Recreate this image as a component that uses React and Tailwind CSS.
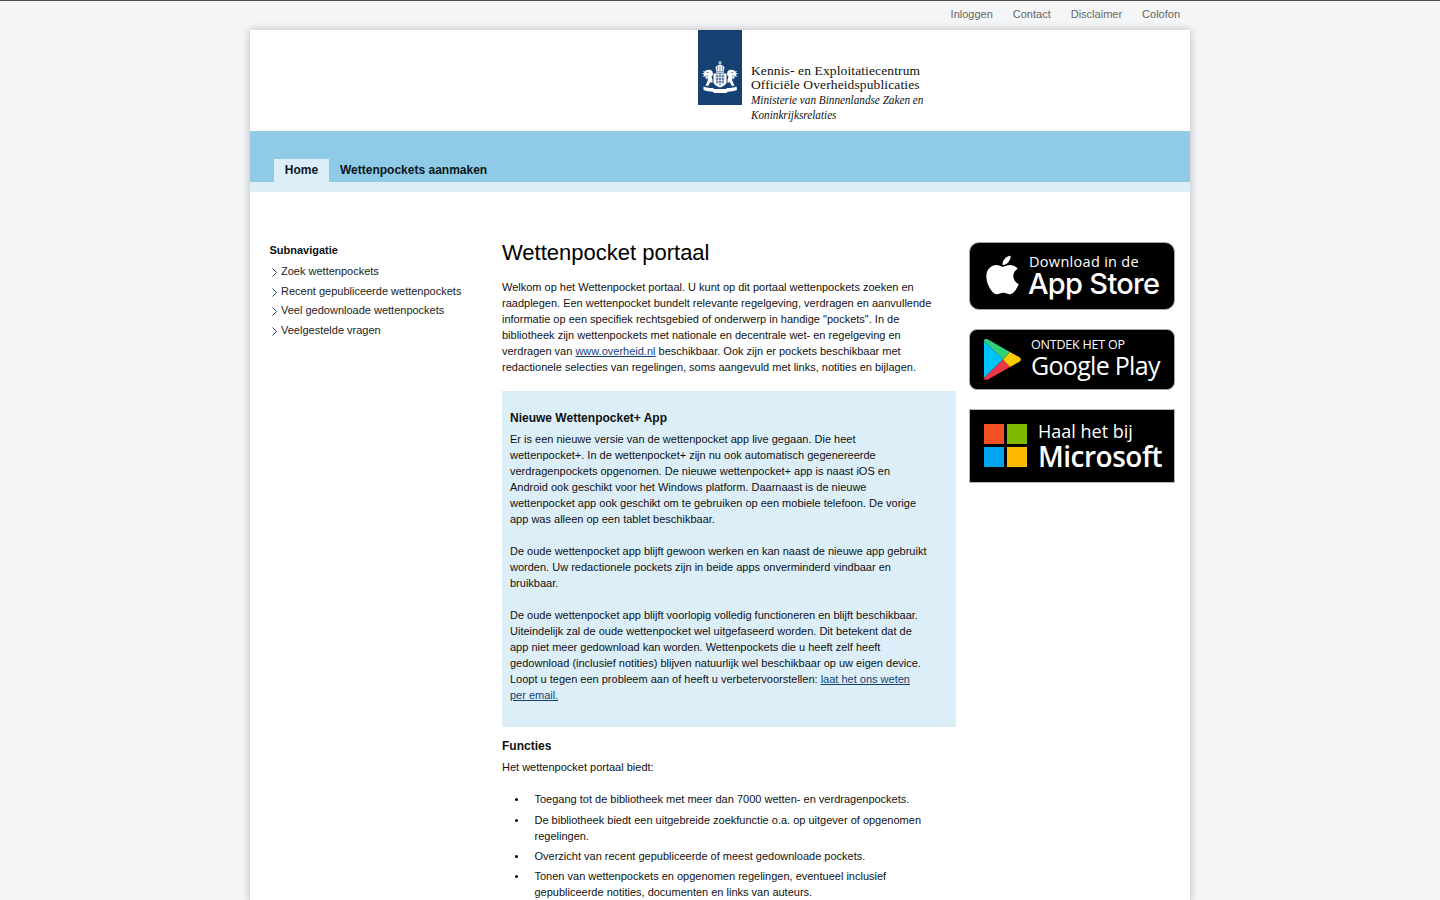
import { FaApple } from 'react-icons/fa';

const topLinks = ['Inloggen', 'Contact', 'Disclaimer', 'Colofon'];

const subNav = [
  { label: 'Zoek wettenpockets', cls: 'h-[20px]' },
  { label: 'Recent gepubliceerde wettenpockets', cls: 'h-[19px]' },
  { label: 'Veel gedownloade wettenpockets', cls: 'h-[20px]' },
  { label: 'Veelgestelde vragen', cls: 'h-[20px]' },
];

const functies = [
  { text: 'Toegang tot de bibliotheek met meer dan 7000 wetten- en verdragenpockets.', cls: 'mb-[5px]' },
  { text: 'De bibliotheek biedt een uitgebreide zoekfunctie o.a. op uitgever of opgenomen regelingen.', cls: 'mb-[4px]' },
  { text: 'Overzicht van recent gepubliceerde of meest gedownloade pockets.', cls: 'mb-[4px]' },
  { text: 'Tonen van wettenpockets en opgenomen regelingen, eventueel inclusief gepubliceerde notities, documenten en links van auteurs.', cls: 'mb-[4px]' },
];

const Chevron = () => (
  <svg width="5" height="9" viewBox="0 0 5 9" className="mt-[5px] mr-[5px] ml-[2px] shrink-0" fill="none">
    <path d="M0.5 0.5 L4.5 4.5 L0.5 8.5" stroke="#154273" strokeWidth="1" />
  </svg>
);

// rough drawing of the state arms: crown, two lions, shield, ribbon
const Arms = () => (
  <svg width="38" height="32" viewBox="0 0 38 32" className="mt-[31px] ml-[3px]" fill="#fff">
    {/* crown */}
    <path d="M18.500 0h1v1.500h1v1h-1V4h-1V2.500h-1v-1h1z" />
    <path d="M14.500 6.500c1-2 3-2.800 4.500-2.800s3.500.8 4.500 2.800l-.8 3.500h-7.400z" />
    <path d="M16.500 5.500v4M19 4.500v5.500M21.500 5.500v4" stroke="#154273" strokeWidth="0.6" />
    <rect x="15" y="10.500" width="8" height="1.200" />
    {/* shield */}
    <path d="M12.500 12.500h13v8.500c0 2.500-3.500 4.500-6.500 5.500-3-1-6.500-3-6.500-5.500z" />
    <path d="M14.500 15h9M14.500 18h9M15 21h8M19 13v12M16 13.500v9M22 13.500v9" stroke="#154273" strokeWidth="0.7" />
    {/* left lion */}
    <path d="M11.500 10.500C10 8.500 7.500 8 6 9.500L5 8.500l-.5 2L2 10l1.500 2-2.500.5 2.500 1.500-2 1.500 3 .3.500 2.500 1.500-1.500c.5 1.500.5 3-.5 4.500l-1.500 3.500h3l1.500-3.500 2.500.5v-3l-1-3 1.500-2z" />
    <path d="M5.500 11.500l3 .5M4 15.500l3-1" stroke="#154273" strokeWidth="0.6" />
    {/* right lion */}
    <path d="M26.500 10.500C28 8.500 30.500 8 32 9.500l1-1 .5 2L36 10l-1.500 2 2.500.5-2.500 1.500 2 1.500-3 .3-.5 2.500-1.500-1.500c-.5 1.500-.5 3 .5 4.500l1.500 3.500h-3l-1.500-3.500-2.500.5v-3l1-3-1.500-2z" />
    <path d="M32.500 11.500l-3 .5M34 15.500l-3-1" stroke="#154273" strokeWidth="0.6" />
    {/* ribbon */}
    <path d="M2.500 25.500c3 1.500 6 1.500 9 1.500l2 1h11l2-1c3 0 6 0 9-1.500l.5 3.500c-3 1.500-6 1.500-9 1.800l-2 1.200H13.500l-2-1.200c-3-.3-6-.3-9-1.800z" />
  </svg>
);

const PlayIcon = () => (
  <svg width="37" height="41" viewBox="0 0 37 41">
    <path d="M0 2v37l19-18.500z" fill="#00c3ff" />
    <path d="M0 2c0-2 2-2.500 4-1.500l22 12.500-7 7.500z" fill="#2fd07a" />
    <path d="M0 39c0 2 2 2.500 4 1.500l22-12.500-7-7.500z" fill="#f0364a" />
    <path d="M26 13l9 5c2.500 1.500 2.500 3.500 0 5l-9 5-7-7.500z" fill="#ffc900" />
  </svg>
);

const App = () => {
  return (
    <div className="min-h-screen bg-[#f4f5f6] border-t border-[#4c4f52] font-['Liberation_Sans',Arial,sans-serif] text-[11px] leading-[16px] text-black">
      {/* Top links */}
      <div className="w-[940px] h-[29px] mx-auto flex justify-end items-start pt-[5px] pr-[10px] gap-[20px] text-[#666]">
        {topLinks.map((link) => (
          <a key={link} href="#">{link}</a>
        ))}
      </div>

      <div className="w-[940px] mx-auto bg-white shadow-[0_0_8px_rgba(0,0,0,0.25)]">
        {/* Header with logo */}
        <div className="h-[101px] pl-[448px] flex">
          <div className="w-[44px] h-[75px] bg-[#154273]">
            <Arms />
          </div>
          <div className="pl-[9px] pt-[34px] font-['Liberation_Serif',serif] text-[#111] whitespace-nowrap">
            <div className="text-[13.5px] leading-[14px] tracking-[0.12px]">Kennis- en Exploitatiecentrum</div>
            <div className="text-[13.5px] leading-[14px] tracking-[0.12px]">Officiële Overheidspublicaties</div>
            <div className="text-[13.5px] leading-[16px] italic origin-left scale-x-[0.83]">Ministerie van Binnenlandse Zaken en</div>
            <div className="text-[13.5px] leading-[13px] italic origin-left scale-x-[0.83]">Koninkrijksrelaties</div>
          </div>
        </div>

        {/* Main navigation */}
        <div className="h-[51px] bg-[#8fcae7] pl-[24px] flex items-end text-[12px] font-bold text-[#0b1720]">
          <a href="#" className="h-[23px] w-[55px] pb-[2px] bg-[#dceef8] flex items-center justify-center">Home</a>
          <a href="#" className="h-[23px] pb-[2px] pl-[11px] flex items-center">Wettenpockets aanmaken</a>
        </div>
        <div className="h-[10px] bg-[#dceef8]" />

        {/* Page body */}
        <div className="flex pt-[48px]">
          {/* Sidebar */}
          <aside className="w-[252px] shrink-0 pl-[20px]">
            <h3 className="font-bold text-[#111] h-[22px] pt-[2px] -ml-[0.5px]">Subnavigatie</h3>
            <ul className="text-[#222]">
              {subNav.map((item) => (
                <li key={item.label} className={`flex pt-[1px] ${item.cls}`}>
                  <Chevron />
                  <a href="#" className="-ml-[1px]">{item.label}</a>
                </li>
              ))}
            </ul>
          </aside>

          {/* Main column */}
          <main className="w-[454px] shrink-0 text-[#111]">
            <h1 className="text-[22px] leading-[26px] text-black mb-[13px]">Wettenpocket portaal</h1>
            <p className="w-[432px] mb-[16px]">
              Welkom op het Wettenpocket portaal. U kunt op dit portaal wettenpockets zoeken en raadplegen. Een wettenpocket bundelt relevante regelgeving, verdragen en aanvullende informatie op een specifiek rechtsgebied of onderwerp in handige "pockets". In de bibliotheek zijn wettenpockets met nationale en decentrale wet- en regelgeving en verdragen van{' '}
              <a href="#" className="underline text-[#154273]">www.overheid.nl</a>{' '}
              beschikbaar. Ook zijn er pockets beschikbaar met redactionele selecties van regelingen, soms aangevuld met links, notities en bijlagen.
            </p>

            <div className="bg-[#dceef8] h-[336px] px-[8px] pt-[19px]">
              <h2 className="text-[12px] font-bold leading-[16px] mb-[5px]">Nieuwe Wettenpocket+ App</h2>
              <p className="w-[418px]">
                Er is een nieuwe versie van de wettenpocket app live gegaan. Die heet wettenpocket+. In de wettenpocket+ zijn nu ook automatisch gegenereerde verdragenpockets opgenomen. De nieuwe wettenpocket+ app is naast iOS en Android ook geschikt voor het Windows platform. Daarnaast is de nieuwe wettenpocket app ook geschikt om te gebruiken op een mobiele telefoon. De vorige app was alleen op een tablet beschikbaar.
              </p>
              <p className="w-[420px] mt-[16px]">
                De oude wettenpocket app blijft gewoon werken en kan naast de nieuwe app gebruikt worden. Uw redactionele pockets zijn in beide apps onverminderd vindbaar en bruikbaar.
              </p>
              <p className="w-[418px] mt-[16px]">
                De oude wettenpocket app blijft voorlopig volledig functioneren en blijft beschikbaar. Uiteindelijk zal de oude wettenpocket wel uitgefaseerd worden. Dit betekent dat de app niet meer gedownload kan worden. Wettenpockets die u heeft zelf heeft gedownload (inclusief notities) blijven natuurlijk wel beschikbaar op uw eigen device. Loopt u tegen een probleem aan of heeft u verbetervoorstellen:{' '}
                <a href="#" className="underline text-[#154273]">laat het ons weten per email.</a>
              </p>
            </div>

            <h2 className="text-[12px] font-bold leading-[16px] mt-[11px] mb-[5px]">Functies</h2>
            <p>Het wettenpocket portaal biedt:</p>
            <ul className="mt-[16px] pl-[13px] w-[440px]">
              {functies.map((item) => (
                <li key={item.text} className={`flex ${item.cls}`}>
                  <span className="w-[3px] h-[3px] mt-[7px] mr-[16.500px] rounded-full bg-black shrink-0" />
                  <span>{item.text}</span>
                </li>
              ))}
            </ul>
          </main>

          {/* App badges */}
          <aside className="pl-[13px] pt-[2px] flex flex-col gap-[19px] text-white font-['Open_Sans',sans-serif]">
            <a href="#" className="w-[206px] h-[68px] bg-black rounded-[10px] border border-[#a6a6a6] flex items-center pl-[16px]">
              <FaApple className="text-[44px] w-[33px] shrink-0 -mt-[2px]" />
              <div className="pl-[9px]">
                <div className="text-[14.5px] leading-[16px] tracking-[0.3px] pl-[1px] mt-[1px]">Download in de</div>
                <div className="text-[29px] leading-[30px] -mt-[1px] font-['Inter',sans-serif] font-medium tracking-[-0.7px]">App Store</div>
              </div>
            </a>
            <a href="#" className="w-[206px] h-[61px] bg-black rounded-[8px] border border-[#a6a6a6] flex items-center pl-[14px]">
              <PlayIcon />
              <div className="pl-[10px] -mt-[3px]">
                <div className="text-[12.500px] leading-[14px] tracking-[-0.2px] mt-[1px]">ONTDEK HET OP</div>
                <div className="text-[25px] leading-[28px] -mt-[1px] font-medium tracking-[-0.7px]">Google Play</div>
              </div>
            </a>
            <a href="#" className="w-[206px] h-[74px] bg-black border border-[#b5b5b5] flex items-center pl-[14px]">
              <div className="grid grid-cols-[20px_20px] grid-rows-[20px_20px] gap-[3px] shrink-0 -mt-[2px]">
                <div className="bg-[#f25022]" />
                <div className="bg-[#7fba00]" />
                <div className="bg-[#00a4ef]" />
                <div className="bg-[#ffb900]" />
              </div>
              <div className="pl-[11px] -mt-[2px]">
                <div className="text-[18px] leading-[22px] mt-[1px]">Haal het bij</div>
                <div className="text-[28px] leading-[30px] -mt-[1px] font-semibold tracking-[-0.5px]">Microsoft</div>
              </div>
            </a>
          </aside>
        </div>
      </div>
    </div>
  );
};

export default App;
